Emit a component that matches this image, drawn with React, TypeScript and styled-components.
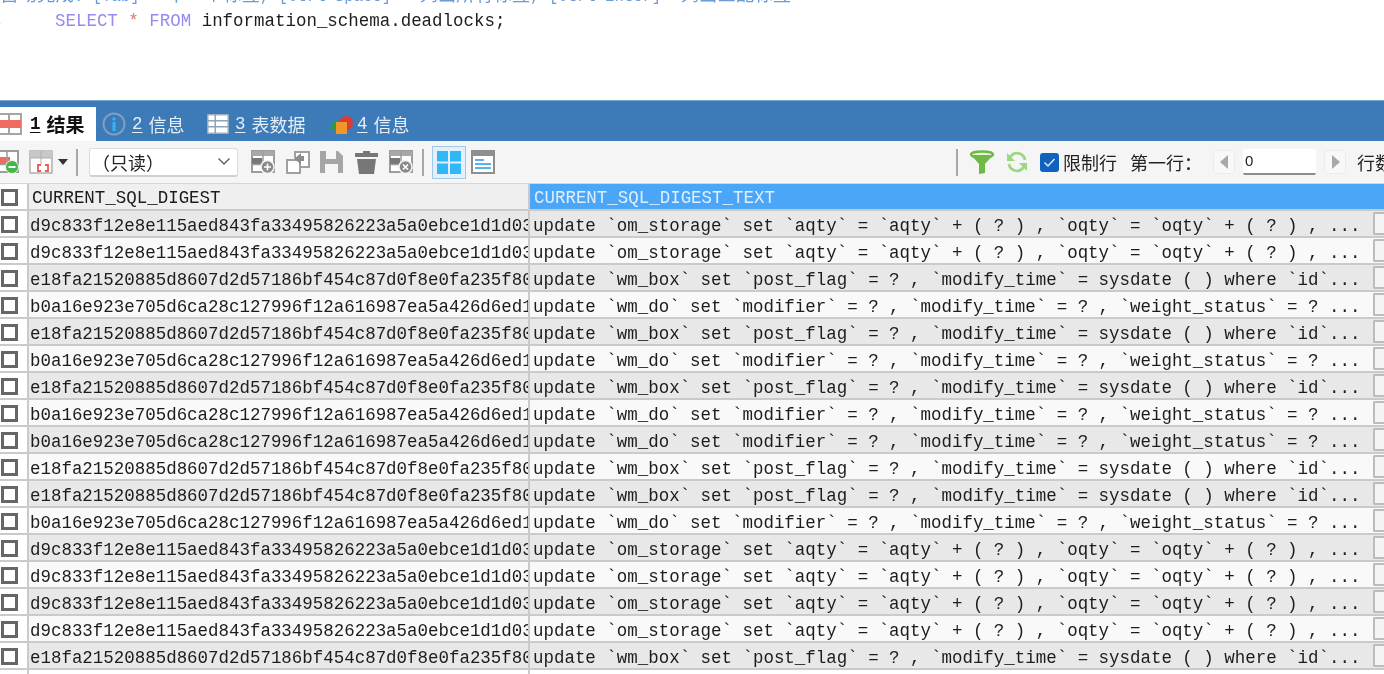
import React from "react";
import styled, { createGlobalStyle } from "styled-components";

const Global = createGlobalStyle`
  html, body { margin: 0; padding: 0; background: #fff; overflow: hidden; }
  #root { width: 1384px; height: 674px; overflow: hidden; }
`;

const MONO = `"Liberation Mono", "Noto Sans CJK SC", monospace`;
const CJK = `"Noto Sans CJK SC", "Liberation Sans", sans-serif`;

const Page = styled.div`
  width: 1384px;
  height: 674px;
  overflow: hidden;
  display: flex;
  flex-direction: column;
  filter: blur(0.35px);
`;
const Editor = styled.div`
  height: 100px;
  flex: none;
  background: #fff;
  overflow: hidden;
`;
const HintClip = styled.div`
  height: 8px;
  overflow: hidden;
  display: flex;
  align-items: flex-end;
`;
const Hint = styled.div`
  font: 15.6px/24px ${MONO};
  color: #6b9ad6;
  white-space: pre;
  flex: none;
  margin-left: 0;
  margin-bottom: -1px;
`;
const Han = styled.span<{ $nudge?: number }>`
  font-size: 18.5px;
  line-height: 20px;
  margin-left: ${(p) => p.$nudge ?? 0}px;
`;
const CodeLine = styled.div`
  display: flex;
  height: 24px;
  margin-top: 1px;
  align-items: center;
  font: 17.47px/24px ${MONO};
  white-space: pre;
  color: #1d1d1d;
`;
const LineNo = styled.span`
  width: 55px;
  flex: none;
  text-indent: -7px;
  color: #5a7fb5;
  font-size: 13px;
`;
const Keyword = styled.span`
  color: #958bf0;
`;
const Star = styled.span`
  color: #e0766e;
`;

const TabBar = styled.div`
  height: 41px;
  flex: none;
  background: #3c7ab8;
  border-top: 1px solid #7ba5d0;
  box-sizing: border-box;
  display: flex;
  align-items: flex-end;
`;
const Tab = styled.div<{ $active?: boolean; $w: number }>`
  width: ${(p) => p.$w}px;
  height: 34px;
  box-sizing: border-box;
  display: flex;
  align-items: center;
  flex: none;
  font: ${(p) => (p.$active ? 700 : 400)} ${(p) => (p.$active ? 19 : 18)}px/24px ${CJK};
  color: ${(p) => (p.$active ? "#111" : "#e4eef8")};
  background: ${(p) => (p.$active ? "#fff" : "transparent")};
  white-space: pre;
`;
const Num = styled.span<{ $l: number }>`
  font-family: "Liberation Mono", monospace;
  font-size: 17.47px;
  text-decoration: underline;
  text-underline-offset: 3px;
  margin-left: ${(p) => p.$l}px;
  margin-right: 6px;
`;

const Toolbar = styled.div`
  height: 43px;
  flex: none;
  background: #f5f5f5;
  display: flex;
  align-items: center;
  border-bottom: 1px solid #d6d6d6;
  box-sizing: border-box;
  overflow: hidden;
`;
const Sep = styled.span<{ $l: number; $r: number }>`
  width: 2px;
  height: 27px;
  flex: none;
  background: #a8a8a8;
  margin: 0 ${(p) => p.$r}px 0 ${(p) => p.$l}px;
`;
const ReadOnly = styled.div`
  width: 149px;
  height: 29px;
  margin-right: 13px;
  flex: none;
  box-sizing: border-box;
  background: #fff;
  border: 1px solid #dcdcdc;
  border-bottom: 2px solid #d0d0d0;
  border-radius: 3px;
  display: flex;
  align-items: center;
  justify-content: space-between;
  padding: 0 6px 0 2px;
  font: 18px/24px ${CJK};
  color: #222;
`;
const ToolIcon = styled.svg<{ $mr?: number; $ml?: number }>`
  flex: none;
  display: block;
  margin-left: ${(p) => p.$ml ?? 0}px;
  margin-right: ${(p) => p.$mr ?? 0}px;
`;
const ActiveBtn = styled.div`
  width: 34px;
  height: 33px;
  flex: none;
  box-sizing: border-box;
  display: flex;
  align-items: center;
  justify-content: center;
  background: #e3f0fb;
  border: 1px solid #9ec9ee;
  margin-right: 5px;
`;
const Check = styled.div`
  width: 19px;
  height: 19px;
  flex: none;
  border-radius: 3px;
  background: #0f62bd;
  display: flex;
  align-items: center;
  justify-content: center;
  margin-right: 4px;
`;
const Label = styled.span<{ $mr: number; $ml?: number }>`
  font: 18px/24px ${CJK};
  color: #222;
  flex: none;
  white-space: pre;
  margin-left: ${(p) => p.$ml ?? 0}px;
  margin-right: ${(p) => p.$mr}px;
`;
const Stepper = styled.div`
  width: 22px;
  height: 24px;
  flex: none;
  box-sizing: border-box;
  border: 1px solid #ececec;
  border-radius: 4px;
  background: #f8f8f8;
  display: flex;
  align-items: center;
  justify-content: center;
`;
const RowInput = styled.div`
  width: 73px;
  height: 26px;
  flex: none;
  margin: 0 8px;
  box-sizing: border-box;
  background: #fff;
  border-bottom: 2px solid #8c8c8c;
  border-radius: 2px;
  padding-left: 2px;
  font: 15px/24px "Liberation Sans", sans-serif;
  color: #222;
`;

const Grid = styled.div`
  flex: 1;
  background: #fff;
  overflow: hidden;
`;
const Row = styled.div<{ $tone?: "shade" | "plain" | "empty" }>`
  display: grid;
  grid-template-columns: 29px 501px 842px 1fr;
  height: 27px;
  box-sizing: border-box;
  border-bottom: 2px solid #cacaca;
  background: ${(p) =>
    p.$tone === "shade" ? "#e8e8e8" : p.$tone === "empty" ? "#fff" : "#f9f9f9"};
`;
const HeadRow = styled(Row)`
  background: #efefef;
`;
const CheckCell = styled.div`
  background: #fff;
  border-right: 2px solid #cacaca;
  display: flex;
  align-items: center;
  padding: 2px 0 0 1px;
`;
const Box = styled.span`
  width: 17px;
  height: 17px;
  box-sizing: border-box;
  border: 3px solid #666;
  background: #fff;
`;
const Cell = styled.div<{ $top?: number; $left?: number }>`
  font: 17.47px/25px ${MONO};
  color: #1c1c1c;
  white-space: pre;
  overflow: hidden;
  padding: ${(p) => p.$top ?? 3}px 0 0 ${(p) => p.$left ?? 1}px;
  border-right: 2px solid #cacaca;
`;
const TextCell = styled(Cell)`
  border-right: none;
`;
const HeadSelected = styled(TextCell)`
  grid-column: 3 / 5;
  color: #dcefff;
  background: #4ba6f7;
`;
const Stub = styled.div`
  margin: 1px 0 1px 1px;
  background: #f4f4f4;
  border: 2px solid #bcbcbc;
  border-right: none;
  border-radius: 2px 0 0 2px;
`;

const A = [
  "d9c833f12e8e115aed843fa33495826223a5a0ebce1d1d03f",
  "update `om_storage` set `aqty` = `aqty` + ( ? ) , `oqty` = `oqty` + ( ? ) , ...",
];
const B = [
  "e18fa21520885d8607d2d57186bf454c87d0f8e0fa235f80c",
  "update `wm_box` set `post_flag` = ? , `modify_time` = sysdate ( ) where `id`...",
];
const C = [
  "b0a16e923e705d6ca28c127996f12a616987ea5a426d6ed1a",
  "update `wm_do` set `modifier` = ? , `modify_time` = ? , `weight_status` = ? ...",
];
const rows = [A, A, B, C, B, C, B, C, C, B, B, C, A, A, A, A, B];

const GrayGrid = ({ badge }: { badge: "plus" | "x" }) => (
  <ToolIcon width="24" height="24" viewBox="0 0 24 24" $mr={11}>
    <rect x="1" y="1" width="22" height="21" fill="#fff" stroke="#9c9c9c" strokeWidth="2" />
    <rect x="1" y="1" width="22" height="5" fill="#a8a8a8" />
    <rect x="1" y="8" width="10" height="7" fill="#777" />
    <path d="M12 1v21M1 14.500h22" stroke="#9c9c9c" strokeWidth="1.500" />
    <circle cx="16.500" cy="17" r="6.500" fill="#8a8a8a" stroke="#f5f5f5" strokeWidth="1.500" />
    {badge === "plus" ? (
      <path d="M13 17h7M16.500 13.500v7" stroke="#fff" strokeWidth="1.600" />
    ) : (
      <path d="M14 14.500l5 5M19 14.500l-5 5" stroke="#fff" strokeWidth="1.600" />
    )}
  </ToolIcon>
);

export default function App() {
  return (
    <Page>
      <Global />
      <Editor>
        <HintClip>
          <Hint>
            <Han>自动完成</Han>: [Tab] &gt; <Han>下一个标签</Han>, [Ctrl+Space] &gt; <Han>列出所有标签</Han>, [Ctrl+Enter] &gt; <Han $nudge={-9}>列出匹配标签</Han>
          </Hint>
        </HintClip>
        <CodeLine>
          <LineNo>1</LineNo>
          <span>
            <Keyword>SELECT</Keyword> <Star>*</Star> <Keyword>FROM</Keyword> information_schema.deadlocks;
          </span>
        </CodeLine>
      </Editor>

      <TabBar>
        <Tab $active $w={96}>
          <ToolIcon width="22" height="24" viewBox="0 0 22 24">
            <rect x="-6" y="2" width="27" height="20" fill="#fff" stroke="#a5a5a5" strokeWidth="2" />
            <path d="M9 2v20" stroke="#a5a5a5" strokeWidth="2" />
            <rect x="-6" y="8" width="27" height="8" fill="#ef6a60" />
          </ToolIcon>
          <Num $l={8}>1</Num>
          <span>结果</span>
        </Tab>
        <Tab $w={111}>
          <ToolIcon width="24" height="24" viewBox="0 0 24 24" $ml={6}>
            <circle cx="12" cy="12" r="10.500" fill="none" stroke="#7f9fc0" strokeWidth="2" />
            <circle cx="12" cy="7" r="1.700" fill="#35b4f4" />
            <rect x="10.500" y="10" width="3" height="9" fill="#35b4f4" />
          </ToolIcon>
          <Num $l={6}>2</Num>
          <span>信息</span>
        </Tab>
        <Tab $w={122}>
          <ToolIcon width="22" height="22" viewBox="0 0 24 24">
            <rect x="1" y="2" width="22" height="20" fill="#fff" stroke="#aab4bf" strokeWidth="1.500" />
            <path d="M1 8.500h22M1 15h22M9 2v20" stroke="#8ea4bb" strokeWidth="1.600" />
          </ToolIcon>
          <Num $l={6}>3</Num>
          <span>表数据</span>
        </Tab>
        <Tab $w={110}>
          <ToolIcon width="25" height="22" viewBox="0 0 25 22">
            <path d="M0 17L7 6l6 11z" fill="#2f9a3f" />
            <circle cx="17" cy="10" r="7" fill="#dc3a32" />
            <rect x="7" y="9" width="11" height="12" fill="#f0962a" />
          </ToolIcon>
          <Num $l={3}>4</Num>
          <span>信息</span>
        </Tab>
      </TabBar>

      <Toolbar>
        <ToolIcon width="19" height="24" viewBox="5 0 19 24" $mr={10}>
          <rect x="1" y="1" width="22" height="21" fill="#fff" stroke="#9c9c9c" strokeWidth="2" />
          <rect x="1" y="7" width="14" height="7" fill="#ef6a60" />
          <path d="M12 1v21M1 14.500h22" stroke="#9c9c9c" strokeWidth="1.500" />
          <circle cx="17" cy="17" r="6.500" fill="#45b649" stroke="#f5f5f5" strokeWidth="1" />
          <path d="M13.500 17h7" stroke="#fff" strokeWidth="2" />
        </ToolIcon>
        <ToolIcon width="25" height="25" viewBox="0 0 25 25" $mr={3}>
          <rect x="1" y="1" width="22" height="22" fill="#fff" stroke="#b0b0b0" strokeWidth="1.500" />
          <rect x="1" y="1" width="22" height="7" fill="#c8c8c8" />
          <path d="M12 1v13M1 8h22" stroke="#b0b0b0" strokeWidth="1" />
          <path d="M12 15h-3v6h3M16 15h3v6h-3" fill="none" stroke="#ee5a4e" strokeWidth="1.800" />
        </ToolIcon>
        <ToolIcon width="12" height="8" viewBox="0 0 12 8">
          <path d="M1 1h10L6 7z" fill="#333" />
        </ToolIcon>
        <Sep $l={7} $r={11} />
        <ReadOnly>
          <span>（只读）</span>
          <ToolIcon width="14" height="9" viewBox="0 0 14 9">
            <path d="M1.500 1.500L7 7l5.500-5.500" fill="none" stroke="#666" strokeWidth="1.500" />
          </ToolIcon>
        </ReadOnly>
        <GrayGrid badge="plus" />
        <ToolIcon width="24" height="24" viewBox="0 0 24 24" $mr={9}>
          <path d="M9 8V2h14v15h-8" fill="#fff" stroke="#a0a0a0" strokeWidth="2" />
          <rect x="1" y="10" width="13" height="13" fill="#fff" stroke="#a0a0a0" strokeWidth="2" />
          <path d="M15 3L8 9l7 5v-3h3V6h-3z" fill="#8b8b8b" />
        </ToolIcon>
        <ToolIcon width="25" height="24" viewBox="0 0 25 24" $mr={10}>
          <path d="M1 1h18l5 5v17H1z" fill="#a5a5a5" />
          <rect x="7" y="1" width="10" height="8" fill="#f5f5f5" />
          <rect x="6" y="14" width="13" height="9" fill="#f5f5f5" />
        </ToolIcon>
        <ToolIcon width="25" height="25" viewBox="0 0 25 25" $mr={10}>
          <path d="M9 3V1h7v2h8v4H1V3zM3 9h19l-2 15H5z" fill="#777" />
        </ToolIcon>
        <GrayGrid badge="x" />
        <Sep $l={-2} $r={8} />
        <ActiveBtn>
          <ToolIcon width="24" height="23" viewBox="0 0 24 23">
            <path d="M0 0h11v10.500H0zM13 0h11v10.500H13zM0 12.500h11V23H0zM13 12.500h11V23H13z" fill="#2fb7f6" />
          </ToolIcon>
        </ActiveBtn>
        <ToolIcon width="24" height="24" viewBox="0 0 24 24" $mr={461}>
          <rect x="1" y="1" width="22" height="22" fill="#fff" stroke="#8f8f8f" strokeWidth="2" />
          <rect x="1" y="1" width="22" height="5" fill="#8f8f8f" />
          <path d="M4 10h9M4 14h16M4 18h16" stroke="#58b4ee" strokeWidth="1.800" />
        </ToolIcon>
        <Sep $l={0} $r={11} />
        <ToolIcon width="26" height="25" viewBox="0 0 26 25" $mr={11}>
          <ellipse cx="13" cy="4.500" rx="11" ry="3" fill="#e8f5df" stroke="#6dbb45" strokeWidth="2.500" />
          <path d="M2 5l8 9v10l6-1v-9l8-9z" fill="#6dbb45" />
        </ToolIcon>
        <ToolIcon width="22" height="22" viewBox="0 0 22 22" $mr={12}>
          <path d="M19 9A8 8 0 0 0 5 5L3 8M3 13a8 8 0 0 0 14 4l2-3" fill="none" stroke="#9ed684" strokeWidth="2.800" />
          <path d="M1 2v8h8zM21 20v-8h-8z" fill="#9ed684" />
        </ToolIcon>
        <Check>
          <ToolIcon width="13" height="11" viewBox="0 0 13 11">
            <path d="M1.500 5.500l3.500 3.500 6.500-7" fill="none" stroke="#dfeaf6" strokeWidth="1.500" />
          </ToolIcon>
        </Check>
        <Label $mr={13}>限制行</Label>
        <Label $mr={11}>第一行：</Label>
        <Stepper>
          <ToolIcon width="9" height="14" viewBox="0 0 9 14">
            <path d="M8 0v14L0 7z" fill="#a8a8a8" />
          </ToolIcon>
        </Stepper>
        <RowInput>0</RowInput>
        <Stepper>
          <ToolIcon width="9" height="14" viewBox="0 0 9 14">
            <path d="M1 0v14l8-7z" fill="#a8a8a8" />
          </ToolIcon>
        </Stepper>
        <Label $mr={0} $ml={11}>行数</Label>
      </Toolbar>

      <Grid>
        <HeadRow>
          <CheckCell>
            <Box />
          </CheckCell>
          <Cell $top={2} $left={3}>CURRENT_SQL_DIGEST</Cell>
          <HeadSelected $top={2} $left={4}>CURRENT_SQL_DIGEST_TEXT</HeadSelected>
        </HeadRow>
        {rows.map((r, i) => (
          <Row key={i} $tone={i % 2 === 0 ? "shade" : "plain"}>
            <CheckCell>
              <Box />
            </CheckCell>
            <Cell>{r[0]}</Cell>
            <TextCell $left={3}>{r[1]}</TextCell>
            <Stub />
          </Row>
        ))}
        <Row $tone="empty">
          <CheckCell />
          <Cell />
        </Row>
      </Grid>
    </Page>
  );
}
